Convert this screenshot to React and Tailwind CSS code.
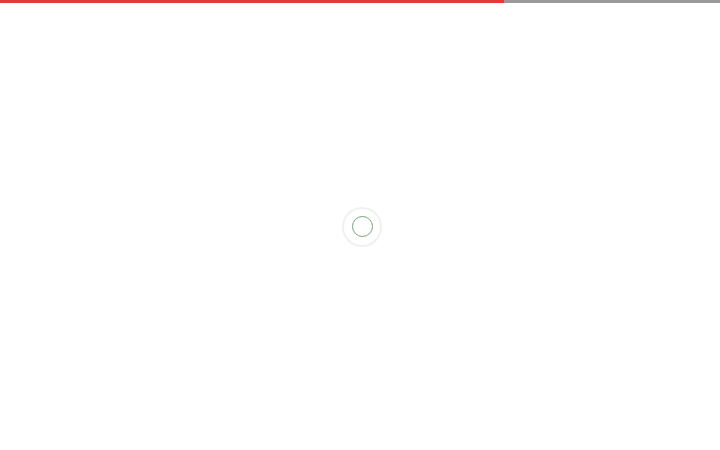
export default function App() {
  return (
    <div className="w-[720px] h-[450px] bg-white flex flex-col overflow-hidden">
      {/* top progress bar */}
      <div className="flex h-[3px] w-full">
        <div className="w-[504px] bg-[#e53935]" />
        <div className="flex-1 bg-[#9a9a9a]" />
      </div>

      {/* loader */}
      <div className="flex-1 flex items-center justify-center pl-1">
        <div className="w-[40px] h-[40px] rounded-full border-2 border-[#f1f1f1] flex items-center justify-center">
          <div className="w-[21px] h-[21px] rounded-full border border-[#75a675]" />
        </div>
      </div>
    </div>
  );
}
